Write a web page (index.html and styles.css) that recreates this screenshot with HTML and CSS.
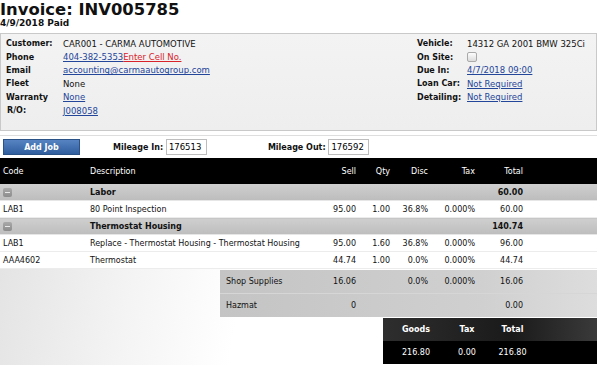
FILE: index.html
```html
<!DOCTYPE html>
<html lang="en">
<head>
    <meta charset="UTF-8">
    <title>Invoice INV005785</title>
    <link rel="stylesheet" href="styles.css">
</head>
<body>
<div class="page">
    <h1 class="title">Invoice: INV005785</h1>
    <div class="subtitle">4/9/2018 Paid</div>

    <div class="info-box">
        <div class="info-col left">
            <span class="lbl">Customer:</span><span>CAR001 - CARMA AUTOMOTIVE</span>
            <span class="lbl">Phone</span><span><a href="#">404-382-5353</a><a href="#" class="red">Enter Cell No.</a></span>
            <span class="lbl">Email</span><span><a href="#">accounting@carmaautogroup.com</a></span>
            <span class="lbl">Fleet</span><span>None</span>
            <span class="lbl">Warranty</span><span><a href="#">None</a></span>
            <span class="lbl indent">R/O:</span><span><a href="#">J008058</a></span>
        </div>
        <div class="info-col right">
            <span class="lbl">Vehicle:</span><span>14312 GA 2001 BMW 325Ci</span>
            <span class="lbl">On Site:</span><span><span class="check"></span></span>
            <span class="lbl">Due In:</span><span><a href="#">4/7/2018 09:00</a></span>
            <span class="lbl">Loan Car:</span><span><a href="#">Not Required</a></span>
            <span class="lbl">Detailing:</span><span><a href="#">Not Required</a></span>
        </div>
    </div>

    <div class="toolbar">
        <button class="btn">Add Job</button>
        <label class="mileage in">Mileage In: <input type="text" value="176513"></label>
        <label class="mileage out">Mileage Out: <input type="text" value="176592"></label>
    </div>

    <table class="lines">
        <colgroup>
            <col style="width:87px"><col style="width:226px"><col style="width:45px"><col style="width:34px">
            <col style="width:38px"><col style="width:47px"><col style="width:48px"><col>
        </colgroup>
        <thead>
            <tr><th>Code</th><th>Description</th><th class="r">Sell</th><th class="r">Qty</th><th class="r">Disc</th><th class="r">Tax</th><th class="r">Total</th><th></th></tr>
        </thead>
        <tbody>
            <tr class="group"><td><span class="minus"></span></td><td>Labor</td><td></td><td></td><td></td><td></td><td class="r">60.00</td><td></td></tr>
            <tr><td>LAB1</td><td>80 Point Inspection</td><td class="r">95.00</td><td class="r">1.00</td><td class="r">36.8%</td><td class="r">0.000%</td><td class="r">60.00</td><td></td></tr>
            <tr class="group"><td><span class="minus"></span></td><td>Thermostat Housing</td><td></td><td></td><td></td><td></td><td class="r">140.74</td><td></td></tr>
            <tr><td>LAB1</td><td>Replace - Thermostat Housing - Thermostat Housing</td><td class="r">95.00</td><td class="r">1.60</td><td class="r">36.8%</td><td class="r">0.000%</td><td class="r">96.00</td><td></td></tr>
            <tr><td>AAA4602</td><td>Thermostat</td><td class="r">44.74</td><td class="r">1.00</td><td class="r">0.0%</td><td class="r">0.000%</td><td class="r">44.74</td><td></td></tr>
        </tbody>
    </table>

    <div class="bottom">
        <div class="extras">
            <div class="extra-row">
                <span>Shop Supplies</span><span class="r">16.06</span><span></span><span class="r">0.0%</span><span class="r">0.000%</span><span class="r">16.06</span>
            </div>
            <div class="extra-row">
                <span>Hazmat</span><span class="r">0</span><span></span><span></span><span></span><span class="r">0.00</span>
            </div>
        </div>

        <div class="totals">
            <div class="tot-head">
                <span>Goods</span><span>Tax</span><span>Total</span><span></span>
            </div>
            <div class="tot-vals">
                <span>216.80</span><span>0.00</span><span>216.80</span><span></span>
            </div>
        </div>
    </div>
</div>
</body>
</html>
```

FILE: styles.css
```css
body {
    margin: 0;
    background: #fff;
    font-family: "DejaVu Sans", Verdana, sans-serif;
    font-size: 8px;
    color: #111;
}

.page {
    width: 597px;
}

a {
    color: #23459a;
}

a.red {
    color: #d8232a;
}

.title {
    margin: 0;
    padding-top: 1px;
    font-size: 16.4px;
    line-height: 17px;
    font-weight: bold;
}

.subtitle {
    font-size: 9px;
    font-weight: bold;
    line-height: 11px;
    margin-bottom: 4px;
}

/* customer / vehicle box */
.info-box {
    display: flex;
    height: 98px;
    border: 1px solid #c9c9c9;
    background: linear-gradient(180deg, #f3f3f3, #eeeeee);
    padding-top: 3px;
    box-sizing: border-box;
    font-size: 8.5px;
}

.info-col {
    display: grid;
    align-content: start;
    grid-auto-rows: 13.4px;
    align-items: center;
}

.info-col.left {
    grid-template-columns: 57px auto;
    padding-left: 5px;
    width: 411px;
}

.info-col.right {
    grid-template-columns: 50px auto;
}

.lbl {
    font-weight: bold;
    font-size: 8px;
}

.lbl.indent {
    padding-left: 1px;
}

.check {
    display: inline-block;
    width: 8px;
    height: 8px;
    border: 1px solid #aaa;
    border-radius: 2px;
    background: linear-gradient(#fdfdfd, #dcdcdc);
    vertical-align: middle;
}

/* mileage bar */
.toolbar {
    display: flex;
    align-items: center;
    margin-top: 4px;
    height: 22px;
    border-top: 1px solid #dedede;
    padding-left: 3px;
}

.btn {
    width: 77px;
    height: 16px;
    padding: 0;
    border: 1px solid #2b5286;
    background: linear-gradient(#5783c2, #2f5e9e);
    color: #fff;
    font-family: inherit;
    font-size: 8px;
    font-weight: bold;
}

.mileage {
    font-weight: bold;
    font-size: 8px;
}

.mileage.in {
    margin-left: 33px;
}

.mileage.out {
    margin-left: 61px;
}

.mileage input {
    width: 41px;
    height: 16px;
    box-sizing: border-box;
    margin: 0;
    padding: 0 2px;
    border: 1px solid #bdbdbd;
    font-family: inherit;
    font-size: 8.5px;
    vertical-align: middle;
}

/* line items */
.lines {
    width: 597px;
    border-collapse: collapse;
    table-layout: fixed;
}

.lines th {
    background: #000;
    color: #fff;
    font-weight: normal;
    text-align: left;
    height: 26px;
    padding: 0 2px 0 3px;
}

.lines td {
    height: 16px;
    padding: 0 2px 0 3px;
    border-bottom: 1px solid #ececec;
    white-space: nowrap;
    overflow: hidden;
    background: #fff;
}

.lines .r {
    text-align: right;
}

.lines tr.group td {
    background: linear-gradient(#cfcfcf, #bdbdbd);
    font-weight: bold;
    border-bottom: 1px solid #e6e6e6;
}

.minus {
    display: block;
    position: relative;
    width: 9px;
    height: 9px;
    border-radius: 2px;
    background: linear-gradient(#a9a9a9, #8c8c8c);
}

.minus::after {
    content: "";
    position: absolute;
    left: 2px;
    right: 2px;
    top: 4px;
    height: 1px;
    background: #e8e8e8;
}

.bottom {
    background: linear-gradient(100deg, #e4e4e4 0%, #f4f4f4 22%, #fff 40%);
    padding-top: 1px;
    height: 95px;
}

.extras {
    margin-left: 220px;
    background: linear-gradient(90deg, #c4c4c4, #d0d0d0 70%, #dddddd);
}

.extra-row {
    display: grid;
    grid-template-columns: 93px 45px 34px 38px 47px 48px;
    align-items: center;
    height: 23px;
}

.extra-row:first-child {
    border-bottom: 1px solid #d6d6d6;
}

.extra-row span {
    padding-left: 6px;
}

.extra-row .r {
    padding: 0 2px 0 0;
    text-align: right;
}

.totals {
    margin-left: 383px;
    margin-top: 1px;
    width: 214px;
    color: #fff;
}

.tot-head,
.tot-vals {
    display: grid;
    grid-template-columns: 66px 36px 55px 1fr;
    align-items: center;
    text-align: center;
    height: 23px;
}

.tot-head {
    background: linear-gradient(90deg, #2e2e2e, #1a1a1a 60%, #3a3a3a);
    font-weight: bold;
}

.tot-vals {
    background: #000;
}
```
